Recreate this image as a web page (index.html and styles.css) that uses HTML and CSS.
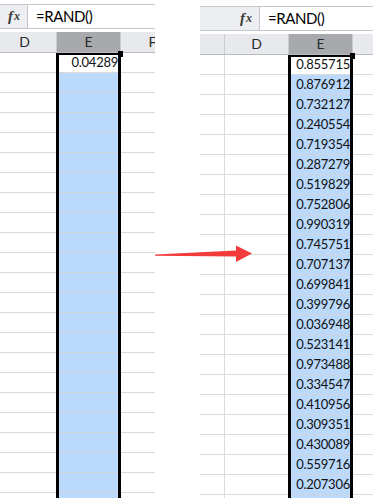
FILE: index.html
```html
<!DOCTYPE html>
<html lang="en">
<head>
    <meta charset="UTF-8">
    <meta name="viewport" content="width=device-width, initial-scale=1.0">
    <title>RAND fill</title>
    <link rel="stylesheet" href="styles.css">
</head>
<body>
    <div class="sheets">
        <!-- before: one value in E -->
        <div class="sheet sheet-before">
            <div class="fbar">
                <div class="fx"><span class="fx-f">f</span><span class="fx-x">x</span></div>
                <div class="formula">=RAND()</div>
            </div>
            <div class="grid">
                <div class="row head"><div class="cell">D</div><div class="cell sel">E</div><div class="cell">F</div></div>
                <div class="row"><div class="cell"></div><div class="cell active">0.04289<span class="handle"></span></div><div class="cell"></div></div>
                <div class="row"><div class="cell"></div><div class="cell sel"></div><div class="cell"></div></div>
                <div class="row"><div class="cell"></div><div class="cell sel"></div><div class="cell"></div></div>
                <div class="row"><div class="cell"></div><div class="cell sel"></div><div class="cell"></div></div>
                <div class="row"><div class="cell"></div><div class="cell sel"></div><div class="cell"></div></div>
                <div class="row"><div class="cell"></div><div class="cell sel"></div><div class="cell"></div></div>
                <div class="row"><div class="cell"></div><div class="cell sel"></div><div class="cell"></div></div>
                <div class="row"><div class="cell"></div><div class="cell sel"></div><div class="cell"></div></div>
                <div class="row"><div class="cell"></div><div class="cell sel"></div><div class="cell"></div></div>
                <div class="row"><div class="cell"></div><div class="cell sel"></div><div class="cell"></div></div>
                <div class="row"><div class="cell"></div><div class="cell sel"></div><div class="cell"></div></div>
                <div class="row"><div class="cell"></div><div class="cell sel"></div><div class="cell"></div></div>
                <div class="row"><div class="cell"></div><div class="cell sel"></div><div class="cell"></div></div>
                <div class="row"><div class="cell"></div><div class="cell sel"></div><div class="cell"></div></div>
                <div class="row"><div class="cell"></div><div class="cell sel"></div><div class="cell"></div></div>
                <div class="row"><div class="cell"></div><div class="cell sel"></div><div class="cell"></div></div>
                <div class="row"><div class="cell"></div><div class="cell sel"></div><div class="cell"></div></div>
                <div class="row"><div class="cell"></div><div class="cell sel"></div><div class="cell"></div></div>
                <div class="row"><div class="cell"></div><div class="cell sel"></div><div class="cell"></div></div>
                <div class="row"><div class="cell"></div><div class="cell sel"></div><div class="cell"></div></div>
                <div class="row"><div class="cell"></div><div class="cell sel"></div><div class="cell"></div></div>
                <div class="row"><div class="cell"></div><div class="cell sel"></div><div class="cell"></div></div>
                <div class="row"><div class="cell"></div><div class="cell sel"></div><div class="cell"></div></div>
            </div>
        </div>

        <!-- after: column filled -->
        <div class="sheet sheet-after">
            <div class="fbar">
                <div class="fx"><span class="fx-f">f</span><span class="fx-x">x</span></div>
                <div class="formula">=RAND()</div>
            </div>
            <div class="grid">
                <div class="row head"><div class="cell"></div><div class="cell">D</div><div class="cell sel">E</div><div class="cell"></div></div>
                <div class="row"><div class="cell"></div><div class="cell"></div><div class="cell active">0.855715<span class="handle"></span></div><div class="cell"></div></div>
                <div class="row"><div class="cell"></div><div class="cell"></div><div class="cell sel">0.876912</div><div class="cell"></div></div>
                <div class="row"><div class="cell"></div><div class="cell"></div><div class="cell sel">0.732127</div><div class="cell"></div></div>
                <div class="row"><div class="cell"></div><div class="cell"></div><div class="cell sel">0.240554</div><div class="cell"></div></div>
                <div class="row"><div class="cell"></div><div class="cell"></div><div class="cell sel">0.719354</div><div class="cell"></div></div>
                <div class="row"><div class="cell"></div><div class="cell"></div><div class="cell sel">0.287279</div><div class="cell"></div></div>
                <div class="row"><div class="cell"></div><div class="cell"></div><div class="cell sel">0.519829</div><div class="cell"></div></div>
                <div class="row"><div class="cell"></div><div class="cell"></div><div class="cell sel">0.752806</div><div class="cell"></div></div>
                <div class="row"><div class="cell"></div><div class="cell"></div><div class="cell sel">0.990319</div><div class="cell"></div></div>
                <div class="row"><div class="cell"></div><div class="cell"></div><div class="cell sel">0.745751</div><div class="cell"></div></div>
                <div class="row"><div class="cell"></div><div class="cell"></div><div class="cell sel">0.707137</div><div class="cell"></div></div>
                <div class="row"><div class="cell"></div><div class="cell"></div><div class="cell sel">0.699841</div><div class="cell"></div></div>
                <div class="row"><div class="cell"></div><div class="cell"></div><div class="cell sel">0.399796</div><div class="cell"></div></div>
                <div class="row"><div class="cell"></div><div class="cell"></div><div class="cell sel">0.036948</div><div class="cell"></div></div>
                <div class="row"><div class="cell"></div><div class="cell"></div><div class="cell sel">0.523141</div><div class="cell"></div></div>
                <div class="row"><div class="cell"></div><div class="cell"></div><div class="cell sel">0.973488</div><div class="cell"></div></div>
                <div class="row"><div class="cell"></div><div class="cell"></div><div class="cell sel">0.334547</div><div class="cell"></div></div>
                <div class="row"><div class="cell"></div><div class="cell"></div><div class="cell sel">0.410956</div><div class="cell"></div></div>
                <div class="row"><div class="cell"></div><div class="cell"></div><div class="cell sel">0.309351</div><div class="cell"></div></div>
                <div class="row"><div class="cell"></div><div class="cell"></div><div class="cell sel">0.430089</div><div class="cell"></div></div>
                <div class="row"><div class="cell"></div><div class="cell"></div><div class="cell sel">0.559716</div><div class="cell"></div></div>
                <div class="row"><div class="cell"></div><div class="cell"></div><div class="cell sel">0.207306</div><div class="cell"></div></div>
                <div class="row"><div class="cell"></div><div class="cell"></div><div class="cell sel"></div><div class="cell"></div></div>
            </div>
        </div>

        <svg class="arrow" width="373" height="498" viewBox="0 0 373 498">
            <polygon points="155,254.5 236,250.5 236,245.5 252,253.5 236,262 236,256.5 155,255.8" fill="#f23c3c"/>
        </svg>
    </div>
</body>
</html>
```

FILE: styles.css
```css
body {
    margin: 0;
    background: #fff;
    font-family: Lato, "Liberation Sans", sans-serif;
    color: #111;
}

.sheets {
    display: flex;
    gap: 45px;
    height: 498px;
    overflow: hidden;
    position: relative;
}

.sheet {
    display: flex;
    flex-direction: column;
    overflow: hidden;
}

.sheet-before {
    width: 155px;
    padding-top: 4px;
}

.sheet-after {
    width: 173px;
    padding-top: 6px;
}

/* formula bar */
.fbar {
    display: flex;
    height: 25px;
    box-sizing: border-box;
    border-top: 1px solid #c4c7cb;
    border-bottom: 1px solid #c4c7cb;
    flex-shrink: 0;
}

.fx {
    box-sizing: border-box;
    background: #eceef1;
    border-right: 1px solid #c4c7cb;
    display: flex;
    align-items: center;
    justify-content: flex-end;
    padding-right: 7px;
    font-family: "Liberation Serif", serif;
    font-style: italic;
    font-weight: bold;
    color: #3a3a3a;
}

.sheet-before .fx { width: 28px; }
.sheet-after .fx { width: 60px; }

.fx-f { font-size: 15px; }
.fx-x { font-size: 12px; margin-left: 1px; }

.formula {
    padding-left: 8px;
    font-size: 15px;
    line-height: 23px;
    letter-spacing: -0.4px;
    color: #000;
}

/* cells */
.grid {
    margin-top: 3px;
}

.sheet-before .grid { margin-left: -7px; }
.sheet-after .grid { margin-left: -39px; }

.row {
    display: grid;
    grid-template-columns: repeat(4, 64px);
    height: 20px;
}

.cell {
    box-sizing: border-box;
    height: 20px;
    border-right: 1px solid #dadada;
    border-bottom: 1px solid #dadada;
    text-align: right;
    padding-right: 4px;
    font-size: 13px;
    line-height: 19px;
    position: relative;
}

.head {
    height: 21px;
}

.head .cell {
    height: 21px;
    background: #e7e9ec;
    border-right-color: #c9cbce;
    border-bottom-color: #b9bcbf;
    text-align: center;
    padding-right: 0;
    font-size: 14px;
    line-height: 20px;
    color: #2a2a2a;
}

.row .cell.sel,
.row .cell.active {
    border-bottom: 0;
    border-right: 0;
    padding-right: 3px;
    letter-spacing: -0.25px;
    box-shadow: -1px 0 #000, inset 2px 0 #000, inset -3px 0 #000;
    background: linear-gradient(#cfd4da, #cfd4da) bottom / 100% 1px no-repeat, #bad9fb;
}

.head .cell.sel {
    box-shadow: none;
    border-right: 1px solid #c9cbce;
    border-bottom: 1px solid #b9bcbf;
    padding-right: 0;
    letter-spacing: 0;
    background: #a7a9ac;
}

.row .cell.active {
    background: linear-gradient(#dadada, #dadada) bottom / 100% 1px no-repeat, #fff;
    box-shadow: -1px 0 #000, inset 2px 0 #000, inset -3px 0 #000, inset 0 2px #000;
}

.handle {
    position: absolute;
    right: -2px;
    top: -2px;
    width: 5px;
    height: 6px;
    background: #000;
}

.arrow {
    position: absolute;
    left: 0;
    top: 0;
    pointer-events: none;
}
```
